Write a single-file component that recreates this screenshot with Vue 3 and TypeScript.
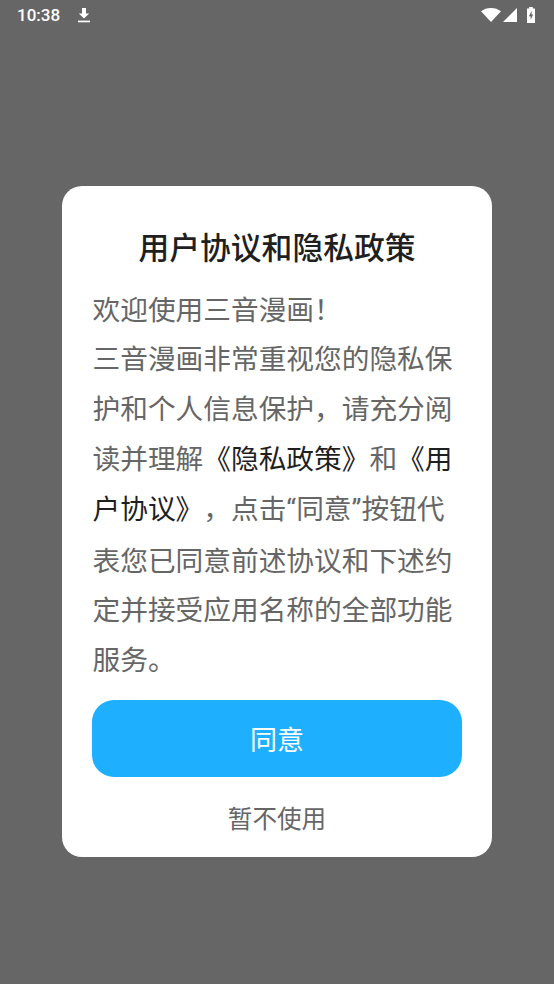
<script setup lang="ts">
const lead = '欢迎使用三音漫画！'
</script>

<template>
  <div class="screen">
    <header class="status">
      <div class="status-left">
        <span class="time">10:38</span>
        <svg class="dl" width="14" height="16" viewBox="0 0 14 16"><path d="M5 1h4v5.500h3.200L7 11.600 1.800 6.500H5z" fill="#fff"/><rect x="1" y="13.600" width="12" height="1.700" fill="#fff"/></svg>
      </div>
      <div class="status-right">
        <svg class="wifi" width="20" height="14" viewBox="0 0 20 14"><path d="M0 3.300C2.700 1.200 6.200 0 10 0s7.300 1.200 10 3.300L10 14z" fill="#fff"/></svg>
        <svg class="signal" width="14" height="14" viewBox="0 0 14 14"><path d="M14 0v14H0z" fill="#fff"/></svg>
        <svg class="battery" width="8" height="16" viewBox="0 0 8 16"><path fill-rule="evenodd" d="M2.200 0h3.600v1.400H8V16H0V1.400h2.200zM4.700 3.800 1.900 9.300h1.700v3.500l2.600-5.200H4.500z" fill="#fff"/></svg>
      </div>
    </header>
    <main class="stage">
      <section class="card">
        <h1 class="title">用户协议和隐私政策</h1>
        <p class="body" lang="zh-CN">{{ lead }}<br>三音漫画非常重视您的隐私保护和个人信息保护，请充分阅读并理解<span class="link">《隐私政策》</span>和<span class="link">《用户协议》</span>，点击<span class="quote">“</span>同意<span class="quote">”</span>按钮代表您已同意前述协议和下述约定并接受应用名称的全部功能服务。</p>
        <button class="agree" type="button">同意</button>
        <button class="later" type="button">暂不使用</button>
      </section>
    </main>
  </div>
</template>

<style scoped>
.screen {
  width: 554px;
  height: 984px;
  background: #666666;
  display: flex;
  flex-direction: column;
  overflow: hidden;
  font-family: "Noto Sans CJK SC", "Noto Sans", sans-serif;
}
.status {
  height: 30px;
  flex: none;
  display: flex;
  align-items: center;
  justify-content: space-between;
  padding: 0 19px 0 17px;
  color: #fff;
}
.status-left {
  display: flex;
  align-items: center;
  gap: 17px;
}
.time {
  font-family: Roboto, sans-serif;
  font-size: 17px;
  font-weight: 500;
}
.status-right {
  display: flex;
  align-items: center;
}
.signal {
  margin-left: 2px;
}
.battery {
  margin-left: 10px;
}
.stage {
  flex: 1;
  padding: 156px 62px 0 61.500px;
}
.card {
  background: #fff;
  border-radius: 20px;
  height: 671px;
  box-sizing: border-box;
  padding: 38px 30px 0 30.500px;
  display: flex;
  flex-direction: column;
}
.title {
  margin: 0;
  font-size: 30.800px;
  line-height: 46px;
  font-weight: 500;
  color: #1f1f1f;
  text-align: center;
  position: relative;
  top: -1px;
}
.body {
  margin: 13.600px 0 0;
  padding-left: 0.500px;
  font-size: 27.700px;
  line-height: 49.800px;
  color: #666666;
  text-align: left;
  text-spacing-trim: space-all;
}
.link {
  color: #1f1f1f;
}
.quote {
  font-family: Roboto, sans-serif;
}
.agree {
  margin-top: 16.400px;
  height: 77px;
  flex: none;
  border: 0;
  border-radius: 22px;
  background: #1eb0ff;
  color: #fff;
  font-family: inherit;
  font-size: 27px;
}
.later {
  margin-top: 19px;
  border: 0;
  background: none;
  padding: 0;
  color: #666666;
  font-family: inherit;
  font-size: 24.600px;
  line-height: 42px;
}
</style>
